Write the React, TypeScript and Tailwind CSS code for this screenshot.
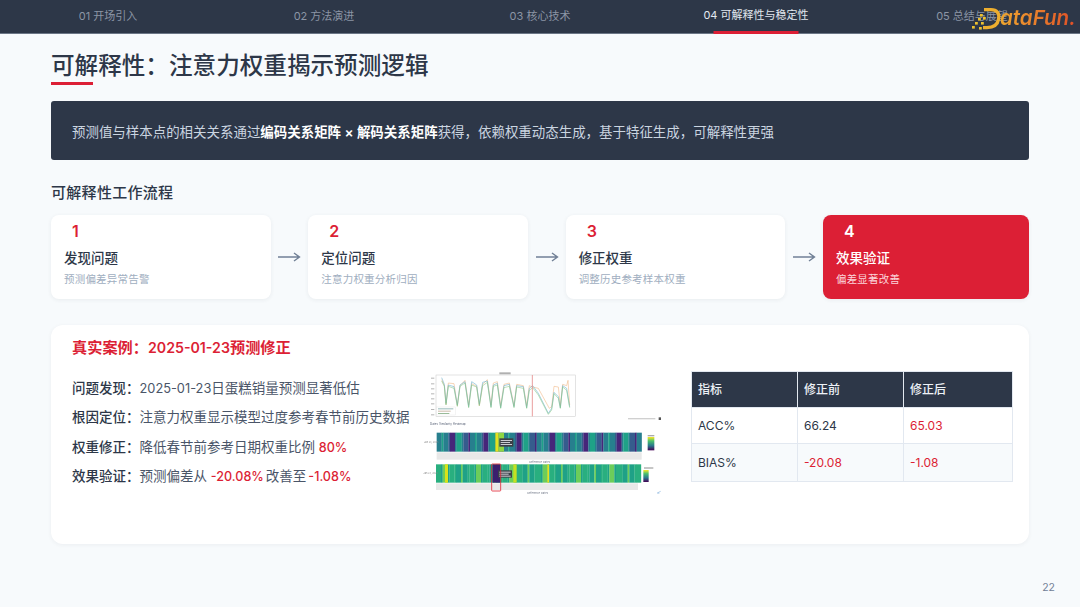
import type { ReactNode } from 'react';

const FONT = "font-['Inter','Noto_Sans_CJK_SC',sans-serif]";

const NAV = ['01 开场引入', '02 方法演进', '03 核心技术', '04 可解释性与稳定性', '05 总结与展望'];

const STEPS = [
  { n: '1', title: '发现问题', desc: '预测偏差异常告警' },
  { n: '2', title: '定位问题', desc: '注意力权重分析归因' },
  { n: '3', title: '修正权重', desc: '调整历史参考样本权重' },
  { n: '4', title: '效果验证', desc: '偏差显著改善' },
];

const COOL = ['#1f968b', '#277f8e', '#2d708e', '#365c8d', '#3b4f8c', '#1fa187', '#2d708e', '#46267a', '#29af7f', '#277f8e'];
const WARM = ['#4ac16d', '#1fa187', '#a0da39', '#29af7f', '#1f968b', '#6ccd5a', '#277f8e', '#29af7f', '#c5e021', '#1fa187'];

// repeatable bands for the two heatmaps
function bands(seed: number, total: number, palette: string[]) {
  const out: { x: number; w: number; c: string }[] = [];
  let s = seed;
  let x = 0;
  while (x < total) {
    s = (s * 9301 + 49297) % 233280;
    const w = 5 + (s % 4) * 5;
    s = (s * 9301 + 49297) % 233280;
    out.push({ x, w, c: palette[s % palette.length] });
    x += w;
  }
  return out;
}

const LINE_A =
  '95,38 103,58 108,115 115,60 132,65 142,120 150,60 165,50 176,125 185,50 200,60 208,118 218,52 232,48 243,125 250,60 262,55 272,128 282,62 298,58 312,125 320,62 340,65 350,128 358,70 368,62 385,85 415,145 425,130 432,82 445,95 451,128 458,62 470,70 479,125';
const LINE_B =
  '95,44 103,62 108,118 115,54 132,56 142,122 150,62 165,46 176,120 185,56 200,64 208,122 218,58 232,44 243,120 250,54 262,50 272,122 282,58 298,54 312,122 320,58 340,62 350,122 358,62 368,66 385,70 418,130 425,125 432,64 445,66 451,122 458,58 470,62 474,46 479,120';
const LINE_C =
  '95,48 103,64 108,120 115,64 132,70 142,124 150,64 165,54 176,128 185,60 200,66 208,122 218,62 232,52 243,128 250,64 262,60 272,130 282,68 298,64 312,128 320,66 340,70 350,130 358,76 368,68 385,90 415,148 425,135 432,86 445,100 451,130 458,66 470,76 479,128';

function ChartImage() {
  const top = bands(17, 615, COOL);
  const bottom = bands(53, 606, WARM);
  return (
    <svg viewBox="0 0 810 420" className="h-[140px] w-[270px] shrink-0 blur-[0.6px]">
      <rect x="78" y="30" width="418" height="124" fill="#fff" stroke="#c8c8c8" strokeWidth="1.5" />
      <rect x="268" y="22" width="34" height="6" fill="#b0b0b0" />
      {[38, 55, 70, 85, 100, 115, 132, 148].map((y) => (
        <rect key={y} x="63" y={y} width="10" height="3" fill="#b5b5b5" />
      ))}
      <polyline points={LINE_B} fill="none" stroke="#f0b27a" strokeWidth="1.6" />
      <polyline points={LINE_A} fill="none" stroke="#5aa9c9" strokeWidth="1.6" />
      <polyline points={LINE_C} fill="none" stroke="#7fc47f" strokeWidth="1.6" />
      <line x1="367" y1="30" x2="367" y2="154" stroke="#e58b8b" strokeWidth="2.5" />
      <rect x="80" y="126" width="56" height="24" fill="#fff" stroke="#ddd" />
      <rect x="84" y="130" width="46" height="3" fill="#9bb" />
      <rect x="84" y="137" width="38" height="3" fill="#cba" />
      <rect x="84" y="144" width="34" height="3" fill="#9b9" />
      <text x="60" y="180" fontSize="9" fill="#5b6478">Dates Similarity Heatmap</text>
      <rect x="654" y="159" width="82" height="4" fill="#d0d0d0" />
      <rect x="746" y="157" width="7" height="8" fill="#555" />

      {top.map((b) => (
        <rect key={b.x} x={80 + b.x} y="203" width={b.w + 0.5} height="57" fill={b.c} />
      ))}
      <rect x="256" y="203" width="10" height="57" fill="#e3e21f" />
      <rect x="266" y="203" width="16" height="57" fill="#8fd744" />
      <rect x="268" y="220" width="42" height="25" fill="#3c4048" />
      <rect x="272" y="225" width="34" height="3" fill="#c9ccd2" />
      <rect x="272" y="231" width="28" height="3" fill="#c9ccd2" />
      <rect x="272" y="237" width="34" height="3" fill="#c9ccd2" />
      <text x="42" y="234" fontSize="7" fill="#888">Jan 23, 2025</text>
      <rect x="80" y="262" width="615" height="22" fill="#e8e8e8" />
      <text x="358" y="293" fontSize="8" fill="#6f7686">Reference Dates</text>
      <rect x="713" y="210" width="20" height="4" fill="#aaa" />
      <defs>
        <linearGradient id="vir" x1="0" y1="1" x2="0" y2="0">
          <stop offset="0" stopColor="#440154" />
          <stop offset="0.35" stopColor="#2a788e" />
          <stop offset="0.7" stopColor="#4ac16d" />
          <stop offset="1" stopColor="#fde725" />
        </linearGradient>
      </defs>
      <rect x="713" y="216" width="20" height="40" fill="url(#vir)" />

      {bottom.map((b) => (
        <rect key={b.x} x={78 + b.x} y="298" width={b.w + 0.5} height="55" fill={b.c} />
      ))}
      <rect x="105" y="298" width="9" height="55" fill="#d8e219" />
      <rect x="412" y="298" width="5" height="55" fill="#e3e21f" />
      <rect x="310" y="298" width="10" height="55" fill="#c5e021" />
      <rect x="248" y="298" width="22" height="55" fill="#3b1f6e" />
      <rect x="264" y="316" width="42" height="22" fill="#3c4048" />
      <rect x="268" y="320" width="34" height="3" fill="#c9ccd2" />
      <rect x="268" y="326" width="28" height="3" fill="#c9ccd2" />
      <rect x="268" y="332" width="34" height="3" fill="#c9ccd2" />
      <text x="40" y="328" fontSize="7" fill="#888">Jan 23, 2025</text>
      <rect x="78" y="355" width="606" height="20" fill="#e8e8e8" />
      <text x="352" y="387" fontSize="8" fill="#6f7686">Reference Dates</text>
      <rect x="702" y="307" width="28" height="4" fill="#aaa" />
      <rect x="700" y="315" width="16" height="36" fill="url(#vir)" />
      <rect x="245" y="297" width="27" height="81" rx="2" fill="none" stroke="#e0202f" strokeWidth="2.4" />
      <path d="M742 384 L752 379 M742 384 L748 385" stroke="#6ba3d6" strokeWidth="1.6" />
    </svg>
  );
}

function Arrow() {
  return (
    <svg viewBox="0 0 24 12" className="h-3 w-6 shrink-0" fill="none">
      <path d="M1 6 H22 M17 2 L22.5 6 L17 10" stroke="#718096" strokeWidth="1.4" />
    </svg>
  );
}

function Logo() {
  const dots = [[10, 8], [13, 11], [8, 12], [5, 16], [11, 16], [2, 20], [9, 21]];
  return (
    <div className="absolute left-[970px] top-[6px] flex h-[26px] items-end">
      <svg viewBox="0 0 32 26" className="h-[26px] w-[32px] shrink-0" fill="none">
        <path d="M14 3.6 H21 C27 3.6 29.6 7.5 28.6 13 C27.5 19.5 23 21.6 17 21.6 H13" stroke="#edae2f" strokeWidth="3.4" />
        {dots.map(([x, y]) => (
          <rect key={`${x}-${y}`} x={x} y={y} width="2.8" height="2.6" fill="#edc12f" />
        ))}
      </svg>
      <span className="-ml-[2px] bg-gradient-to-r from-[#eda52f] to-[#df4a27] bg-clip-text pb-[3px] pr-[2px] font-['Inter',sans-serif] text-[20.5px] font-semibold italic leading-[22px] text-transparent">
        ataFun.
      </span>
    </div>
  );
}

function Row({ label, children }: { label: string; children: ReactNode }) {
  return (
    <p className="h-[29.3px] whitespace-nowrap text-[13.5px] leading-[29px] text-[#4a5568]">
      <span className="font-medium text-[#2d3748]">{label}：</span>
      {children}
    </p>
  );
}

function Hot({ children }: { children: ReactNode }) {
  return <span className="text-[12.6px] font-medium text-[#dc1f35]">{children}</span>;
}

export default function App() {
  return (
    <div className={`${FONT} relative h-[607px] w-[1080px] overflow-hidden bg-[#f7fafc] text-[#2d3748]`}>
      <header className="relative grid h-[34px] grid-cols-5 border-b border-[#6b7686] bg-[#2d3748]">
        {NAV.map((item, i) =>
          i === 3 ? (
            <div key={item} className="relative pb-[4px] text-center text-[11px] leading-[30px] text-[#e2e8f0]">
              {item}
              <div className="absolute bottom-0 left-1/2 h-[3px] w-[85px] -translate-x-1/2 bg-[#dc1f35]" />
            </div>
          ) : (
            <div key={item} className="text-center text-[11px] leading-[33px] text-[#8b95a5]">
              {item}
            </div>
          ),
        )}
        <Logo />
      </header>

      <main className="px-[51px] pt-[14px]">
        <h1 className="text-[23.6px] font-medium leading-[35px] text-[#2d3748]">可解释性：注意力权重揭示预测逻辑</h1>
        <div className="mt-[-1px] h-[3px] w-[42px] bg-[#dc1f35]" />

        <div className="mt-[16px] flex h-[59px] items-center rounded-[3px] bg-[#2d3748] px-[21px] pt-[4px] text-[13.46px] text-[#cbd5e0]">
          <p>
            预测值与样本点的相关关系通过<span className="font-semibold text-white">编码关系矩阵 × 解码关系矩阵</span>
            获得，依赖权重动态生成，基于特征生成，可解释性更强
          </p>
        </div>

        <h2 className="mt-[22px] text-[15px] font-medium leading-[22px] tracking-[0.3px] text-[#2d3748]">可解释性工作流程</h2>

        <div className="mt-[11px] flex h-[84px] items-center justify-between">
          {STEPS.map((s, i) => {
            const last = i === 3;
            return (
              <div key={s.n} className="contents">
                {i > 0 && <Arrow />}
                <div
                  className={`h-[84px] rounded-[8px] px-[13px] shadow-[0_1px_4px_rgba(45,55,72,0.07)] ${
                    last ? 'w-[206px] bg-[#dc1f35]' : 'w-[219.5px] bg-white'
                  }`}
                >
                  <div className={`pl-[8px] pt-[6px] text-[16px] font-semibold leading-[20px] ${last ? 'text-white' : 'text-[#dc1f35]'}`}>
                    {s.n}
                  </div>
                  <div className={`mt-[7px] text-[13.5px] font-medium leading-[20px] ${last ? 'text-white' : 'text-[#2d3748]'}`}>
                    {s.title}
                  </div>
                  <div className={`mt-[3px] text-[10.5px] leading-[18px] tracking-[0.2px] ${last ? 'text-[#fbd5da]' : 'text-[#a0aec0]'}`}>
                    {s.desc}
                  </div>
                </div>
              </div>
            );
          })}
        </div>

        <section className="mt-[26px] h-[219px] rounded-[12px] bg-white px-[21px] pt-[13px] shadow-[0_1px_4px_rgba(45,55,72,0.06)]">
          <h3 className="text-[15.2px] font-semibold leading-[20px] text-[#dc1f35]">
            真实案例：<span className="text-[14.2px]">2025-01-23</span>预测修正
          </h3>

          <div className="flex items-start">
            <div className="w-[338px] shrink-0 pt-[16px]">
              <Row label="问题发现">
                <span className="text-[12.8px]">2025-01-23</span>日蛋糕销量预测显著低估
              </Row>
              <Row label="根因定位">注意力权重显示模型过度参考春节前历史数据</Row>
              <Row label="权重修正">
                降低春节前参考日期权重比例 <Hot>80%</Hot>
              </Row>
              <Row label="效果验证">
                预测偏差从 <Hot>-20.08%</Hot>
                <span className="mx-[2px]">改善至</span>
                <Hot>-1.08%</Hot>
              </Row>
            </div>

            <div className="mt-[7px] shrink-0">
              <ChartImage />
            </div>

            <table className="ml-[11px] mt-[13px] w-[322px] shrink-0 table-fixed border-collapse text-[12px]">
              <thead>
                <tr className="h-[36px] bg-[#2d3748] text-left text-[12px] text-[#edf2f7]">
                  <th className="w-[106px] border border-[#e2e8f0] px-[6px] font-medium">指标</th>
                  <th className="w-[106px] border border-[#e2e8f0] px-[6px] font-medium">修正前</th>
                  <th className="border border-[#e2e8f0] px-[6px] font-medium">修正后</th>
                </tr>
              </thead>
              <tbody>
                <tr className="h-[36px]">
                  <td className="border border-[#e2e8f0] px-[6px]">ACC%</td>
                  <td className="border border-[#e2e8f0] px-[6px]">66.24</td>
                  <td className="border border-[#e2e8f0] px-[6px] text-[#dc1f35]">65.03</td>
                </tr>
                <tr className="h-[38px] bg-[#f7fafc]">
                  <td className="border border-[#e2e8f0] px-[6px]">BIAS%</td>
                  <td className="border border-[#e2e8f0] px-[6px] text-[#dc1f35]">-20.08</td>
                  <td className="border border-[#e2e8f0] px-[6px] text-[#dc1f35]">-1.08</td>
                </tr>
              </tbody>
            </table>
          </div>
        </section>
      </main>

      <div className="absolute bottom-[11px] right-[25px] text-[10.5px] text-[#718096]">22</div>
    </div>
  );
}
